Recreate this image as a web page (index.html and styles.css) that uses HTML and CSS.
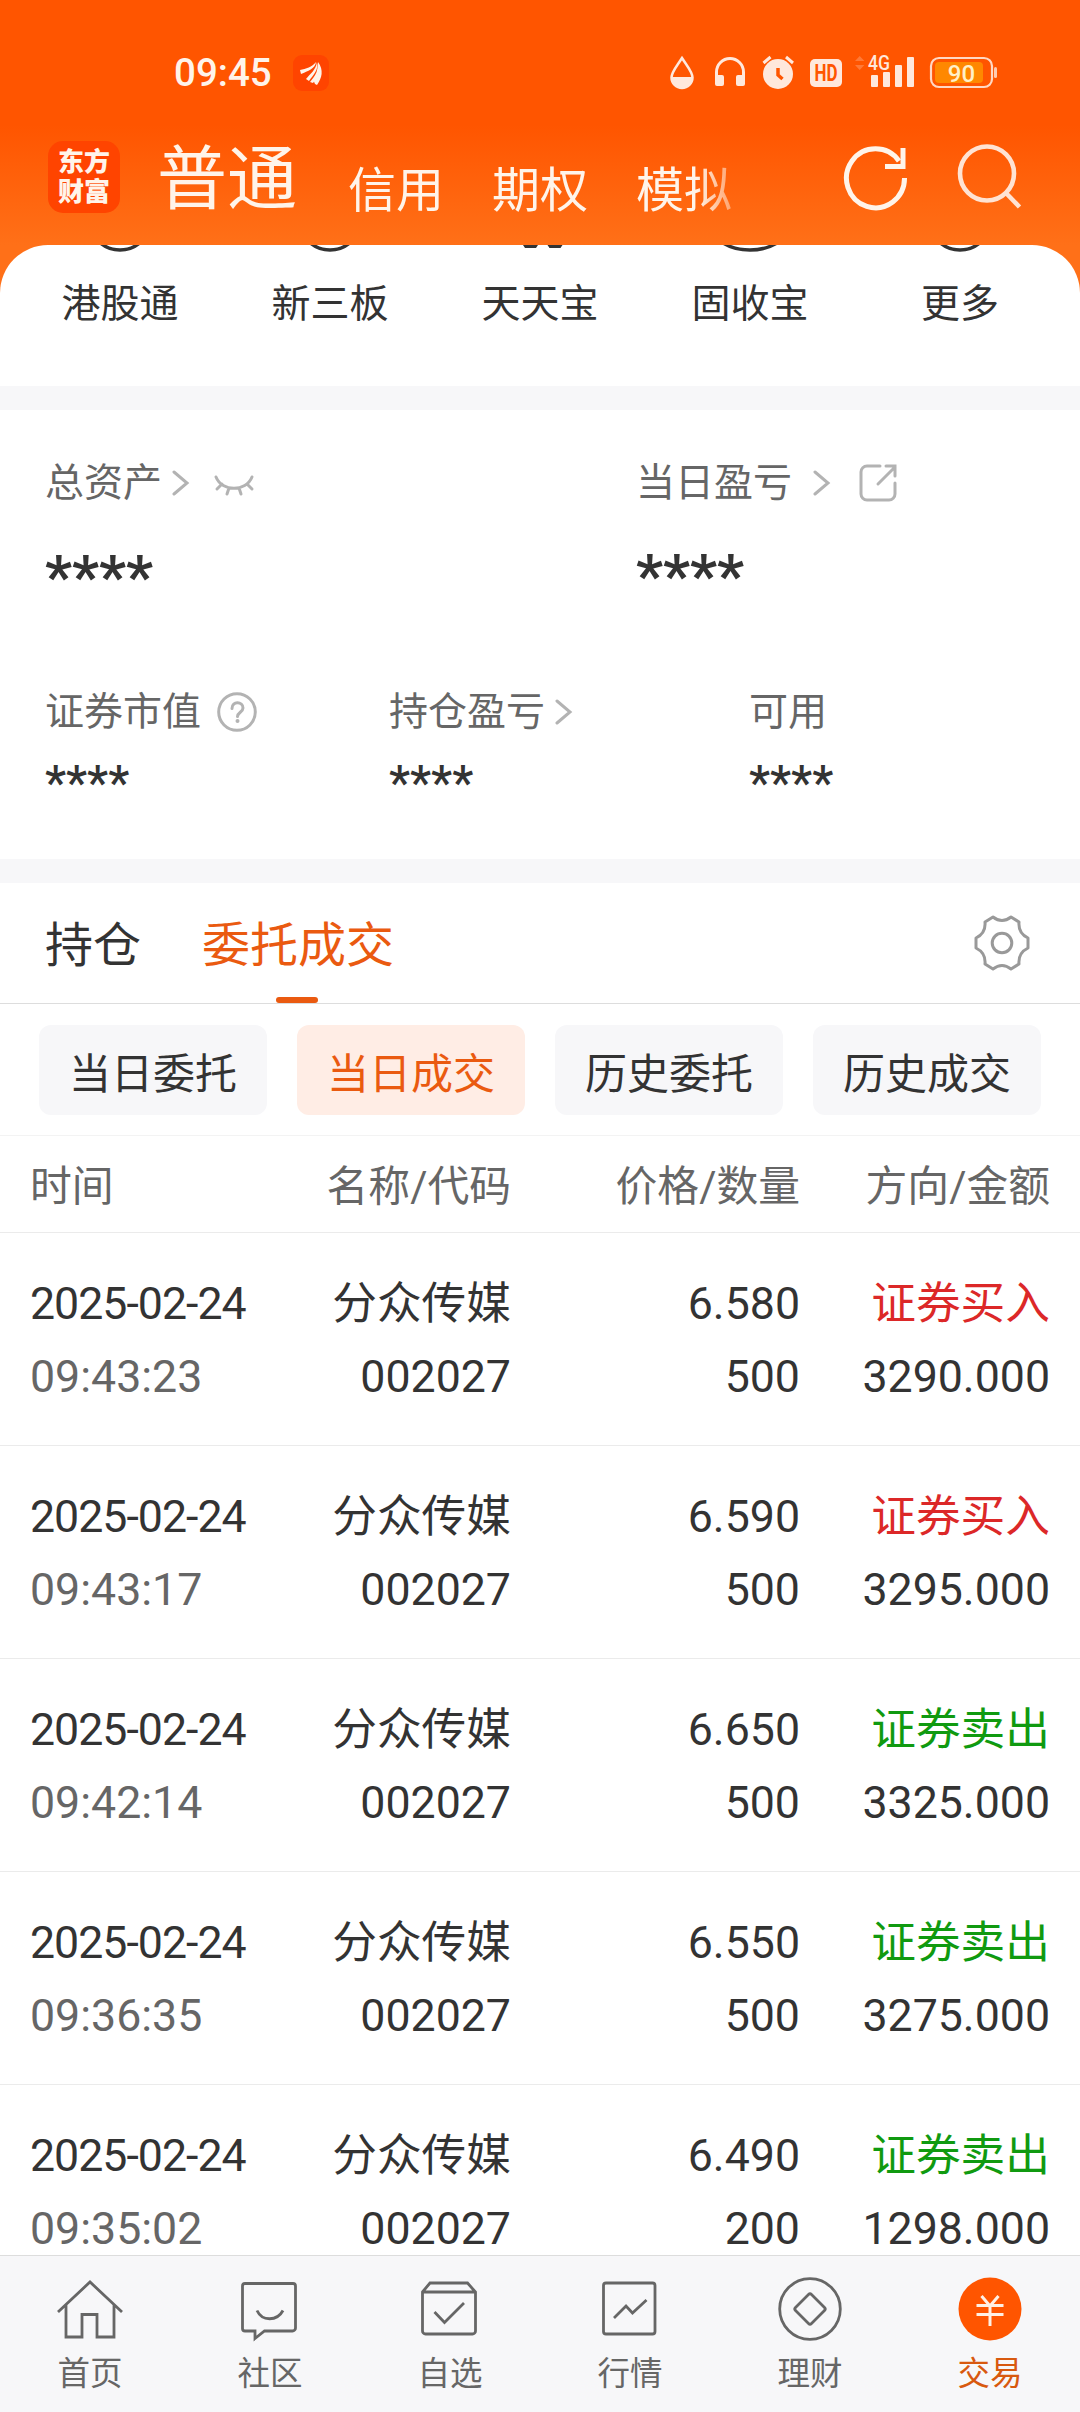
FILE: index.html
```html
<!DOCTYPE html>
<html lang="zh-CN">
  <head>
    <meta charset="UTF-8" />
    <meta name="viewport" content="width=device-width, initial-scale=1.0" />
    <title>东方财富 - 交易</title>
    <link rel="stylesheet" href="styles.css">
  </head>
  <body>
    <header class="header">
      <div class="status">
        <span class="clock">09:45</span>
        <svg class="app-badge" width="36" height="36" viewBox="0 0 36 36">
          <rect width="36" height="36" rx="9" fill="#ff4400" />
          <path d="M7 15c6-1 12-3 16-8-1 7-8 9-15 12zM13 24c4-5 10-9 11-17 2 8-4 13-8 19zM22 29c-2-4-1-6 1-10 1-4 2-7 2-12 6 8 4 16-1 23zM17 27c5-6 9-12 8-20 2 8 0 15-5 21z" fill="#fff4ea" />
        </svg>
        <svg class="status-icons" width="330" height="40" viewBox="668 53 330 40">
          <g fill="#ffe8dc">
            <path d="M682 58c5 8 10.500 14 10.500 19.500a10.500 10.500 0 0 1-21 0C671.500 72 677 66 682 58z" fill="none" stroke="#ffe8dc" stroke-width="2.500" />
            <path d="M671.500 77h21a10.500 10.500 0 0 1-21 0z" />
            <path d="M716.500 80v-8a13.500 13.500 0 0 1 27 0v8" fill="none" stroke="#ffe8dc" stroke-width="3" />
            <rect x="715" y="75" width="9" height="11" rx="2" />
            <rect x="736" y="75" width="9" height="11" rx="2" />
            <circle cx="778" cy="74" r="15" />
            <path d="M763.500 63l7-6M793 63l-7-6" fill="none" stroke="#ffe8dc" stroke-width="3" />
            <path d="M778 68v7l4.500 4" fill="none" stroke="#ff5500" stroke-width="3.500" />
            <rect x="810" y="59" width="32" height="28" rx="5" />
            <path d="M855 61l4.700-5 4.700 5zM855 65h9.400l-4.700 5z" opacity=".25" />
            <rect x="871" y="75" width="7" height="12" rx="1" />
            <rect x="883" y="72" width="7" height="15" rx="1" />
            <rect x="895" y="65" width="7" height="22" rx="1" />
            <rect x="907" y="57" width="7" height="30" rx="1" />
            <rect x="994" y="67" width="3" height="11" rx="1.500" opacity=".8" />
          </g>
          <rect x="931" y="58" width="61" height="29" rx="8" fill="none" stroke="#ffd8c4" stroke-width="2.200" />
          <rect x="935" y="62" width="48" height="21" rx="4" fill="#ff8800" />
          <text class="hd" x="826" y="81" textLength="23" lengthAdjust="spacingAndGlyphs">HD</text>
          <text class="net" x="879" y="70" textLength="22" lengthAdjust="spacingAndGlyphs">4G</text>
          <text class="level" x="961.500" y="81.500">90</text>
        </svg>
      </div>
      <div class="topbar">
        <div class="logo">东方<br>财富</div>
        <nav class="accounts">
          <a class="current">普通</a>
          <a>信用</a>
          <a>期权</a>
          <a>模拟</a>
        </nav>
        <svg class="icon-refresh" width="72" height="72" viewBox="0 0 72 72" fill="none" stroke="#fff4ea" stroke-width="5">
          <path d="M64.500 37a29 29.500 0 1 1-5.500-17" />
          <path d="M63 7v18.500H45" />
        </svg>
        <svg class="icon-search" width="72" height="72" viewBox="0 0 72 72" fill="none" stroke="#ffe3d3" stroke-width="4.600">
          <circle cx="34" cy="32.500" r="27" />
          <path d="M52.500 51.500L66.500 66" />
        </svg>
      </div>
    </header>

    <main class="content">
      <section class="shortcuts">
        <a><svg width="72" height="10" viewBox="0 0 72 10"><ellipse cx="36" cy="-24" rx="30" ry="29" /></svg>港股通</a>
        <a><svg width="72" height="10" viewBox="0 0 72 10"><ellipse cx="36" cy="-24" rx="30" ry="29" /></svg>新三板</a>
        <a><svg width="72" height="10" viewBox="0 0 72 10"><path class="solid" d="M19 0h15l-2 3H21zM43.500 0h15l-2 3h-11z" /></svg>天天宝</a>
        <a><svg width="72" height="10" viewBox="0 0 72 10"><ellipse cx="36" cy="-19" rx="38" ry="24" /></svg>固收宝</a>
        <a><svg width="72" height="10" viewBox="0 0 72 10"><ellipse cx="36" cy="-24" rx="30" ry="29" /></svg>更多</a>
      </section>

      <section class="assets">
        <div class="asset total">
          <div class="label">总资产
            <svg class="chevron" width="18" height="28" viewBox="0 0 18 28"><path d="M2 3l13 11L2 25" /></svg>
            <svg class="eye" width="42" height="28" viewBox="0 0 42 28"><path d="M2 8c6 15 30 15 36 0M8 15l-5 5M15 19l-2 6M25 19l2 6M33 15l5 5" /></svg>
          </div>
          <div class="value">****</div>
        </div>
        <div class="asset total">
          <div class="label">当日盈亏
            <svg class="chevron wide" width="18" height="28" viewBox="0 0 18 28"><path d="M2 3l13 11L2 25" /></svg>
            <svg class="share" width="40" height="40" viewBox="0 0 40 40"><path d="M21 3H8a6 6 0 0 0-6 6v22a6 6 0 0 0 6 6h22a6 6 0 0 0 6-6V20M19 21L36 4M27 3h9v10" /></svg>
          </div>
          <div class="value">****</div>
        </div>
        <div class="asset market">
          <div class="label">证券市值
            <svg class="help" width="40" height="40" viewBox="0 0 40 40"><circle cx="20" cy="20" r="18.300" /><path d="M15 16.500c0-8 11-7 11-.5 0 4-5.500 4.500-5.500 8.500" /><circle class="dot" cx="20.500" cy="29" r="2" /></svg>
          </div>
          <div class="value">****</div>
        </div>
        <div class="asset profit">
          <div class="label">持仓盈亏
            <svg class="chevron" width="18" height="28" viewBox="0 0 18 28"><path d="M2 3l13 11L2 25" /></svg>
          </div>
          <div class="value">****</div>
        </div>
        <div class="asset">
          <div class="label">可用</div>
          <div class="value">****</div>
        </div>
      </section>

      <div class="tabs">
        <a>持仓</a>
        <a class="current">委托成交</a>
        <svg class="gear" width="60" height="60" viewBox="0 0 60 60">
          <path d="M21 4Q30 11 39 4L47 9Q46 20 56 25V35Q46 40 47 51L39 56Q30 49 21 56L13 51Q14 40 4 35V25Q14 20 13 9Z" />
          <circle cx="30" cy="30" r="9.800" />
        </svg>
      </div>

      <div class="chips">
        <button>当日委托</button>
        <button class="current">当日成交</button>
        <button>历史委托</button>
        <button>历史成交</button>
      </div>

      <div class="row head">
        <span>时间</span>
        <span>名称/代码</span>
        <span>价格/数量</span>
        <span>方向/金额</span>
      </div>
      <div class="list">
        <div class="row">
          <span class="date">2025-02-24</span><span>分众传媒</span><span>6.580</span><span class="buy">证券买入</span>
          <span class="time">09:43:23</span><span>002027</span><span>500</span><span>3290.000</span>
        </div>
        <div class="row">
          <span class="date">2025-02-24</span><span>分众传媒</span><span>6.590</span><span class="buy">证券买入</span>
          <span class="time">09:43:17</span><span>002027</span><span>500</span><span>3295.000</span>
        </div>
        <div class="row">
          <span class="date">2025-02-24</span><span>分众传媒</span><span>6.650</span><span class="sell">证券卖出</span>
          <span class="time">09:42:14</span><span>002027</span><span>500</span><span>3325.000</span>
        </div>
        <div class="row">
          <span class="date">2025-02-24</span><span>分众传媒</span><span>6.550</span><span class="sell">证券卖出</span>
          <span class="time">09:36:35</span><span>002027</span><span>500</span><span>3275.000</span>
        </div>
        <div class="row">
          <span class="date">2025-02-24</span><span>分众传媒</span><span>6.490</span><span class="sell">证券卖出</span>
          <span class="time">09:35:02</span><span>002027</span><span>200</span><span>1298.000</span>
        </div>
      </div>
    </main>

    <nav class="bottom">
      <a>
        <svg width="72" height="72" viewBox="0 0 72 72"><path d="M4 39L36 9l32 30M12 32v32h16V41.500h15V64h17V32" /></svg>
        首页
      </a>
      <a>
        <svg width="72" height="72" viewBox="0 0 72 72"><path d="M11 10.500h48a2.500 2.500 0 0 1 2.500 2.500v42a3 3 0 0 1-3 3h-28L21 65.500V58H11a2.500 2.500 0 0 1-2.500-2.500V13a2.500 2.500 0 0 1 2.500-2.500zM23 37.500c5 11 20 11 26 0" /></svg>
        社区
      </a>
      <a>
        <svg width="72" height="72" viewBox="0 0 72 72"><path d="M8.500 19L16 10h37.500l8 9v39a3 3 0 0 1-3 3h-47a3 3 0 0 1-3-3zM8.500 19h53M20.500 39l10 10.500L50 30" /></svg>
        自选
      </a>
      <a>
        <svg width="72" height="72" viewBox="0 0 72 72"><rect x="9.500" y="10" width="51.500" height="51" rx="2.500" /><path d="M20 45l12-12 6.500 7L52.500 27" /></svg>
        行情
      </a>
      <a>
        <svg width="72" height="72" viewBox="0 0 72 72"><circle cx="36" cy="36" r="30.300" /><path d="M34.500 21.500q1.500-1.500 3 0l13 13q1.500 1.500 0 3l-13 13q-1.500 1.500-3 0l-13-13q-1.500-1.500 0-3z" /></svg>
        理财
      </a>
      <a class="current">
        <svg width="72" height="72" viewBox="0 0 72 72"><circle cx="36" cy="36" r="31.500" /><path d="M27.500 23l8.500 10 8.500-10M22.500 32.500h27M22.500 41.500h27M36 33v20" /></svg>
        交易
      </a>
    </nav>
  </body>
</html>
```
FILE: styles.css
```css
* {
  box-sizing: border-box;
}
body {
  display: flex;
  flex-direction: column;
  width: 1080px;
  height: 2412px;
  margin: 0;
  overflow: hidden;
  background: #fff;
  color: #333;
  font-family: Roboto, "Noto Sans CJK SC", sans-serif;
  font-weight: 400;
}
svg {
  display: block;
  flex: none;
}

/* header */
.header {
  flex: none;
  height: 300px;
  background: linear-gradient(#ff5500 0, #ff5500 125px, #ff7018 245px);
}
.status {
  display: flex;
  align-items: center;
  height: 93px;
  padding: 53px 82px 0 174px;
}
.clock {
  width: 119px;
  color: #fff4ea;
  font-size: 38.5px;
  font-weight: 500;
  line-height: 40px;
}
.status-icons {
  margin-left: auto;
  overflow: visible;
}
.hd,
.net,
.level {
  font-family: Roboto, sans-serif;
  text-anchor: middle;
}
.hd {
  fill: #ff5500;
  font-size: 23px;
  font-weight: 700;
}
.net {
  fill: #ffe8dc;
  font-size: 21px;
  font-weight: 500;
}
.level {
  fill: #fff0c8;
  font-size: 24px;
  font-weight: 500;
}
.topbar {
  display: flex;
  height: 152px;
  padding: 48px 0 0 48px;
}
.logo {
  width: 72px;
  height: 72px;
  padding-top: 6px;
  border-radius: 15px;
  background: #ff4400;
  color: #fff4ea;
  font-size: 26px;
  font-weight: 900;
  line-height: 30px;
  text-align: center;
}
.accounts {
  display: flex;
  align-items: flex-start;
  gap: 48px;
  width: 640px;
  height: 104px;
  padding-top: 4px;
  margin-left: 37px;
  color: #fff4ea;
  font-size: 48px;
  line-height: 92px;
  -webkit-mask-image: linear-gradient(90deg, #000 540px, transparent 600px);
  mask-image: linear-gradient(90deg, #000 540px, transparent 600px);
}
.accounts .current {
  margin-right: 3px;
  font-size: 70px;
  line-height: 70px;
}
.icon-refresh {
  margin-left: 43px;
}
.icon-search {
  margin-left: 41px;
}

.content {
  flex: 1;
  min-height: 0;
  margin-top: -55px;
  overflow: hidden;
  border-radius: 48px 48px 0 0;
  background: #fff;
}

/* shortcuts */
.shortcuts {
  display: grid;
  grid-template-columns: repeat(5, 210px);
  justify-content: center;
  height: 141px;
}
.shortcuts a {
  display: flex;
  flex-direction: column;
  align-items: center;
  gap: 24px;
  font-size: 39px;
  line-height: 50px;
}
.shortcuts svg {
  fill: none;
  stroke: #333;
  stroke-width: 3.5;
}
.shortcuts .solid {
  fill: #333;
  stroke: none;
}

/* assets */
.assets {
  display: flex;
  flex-wrap: wrap;
  align-content: flex-start;
  height: 497px;
  padding: 43px 0 0 45px;
  border-top: 24px solid #f7f7f9;
  border-bottom: 24px solid #f7f7f9;
}
.asset {
  width: 280px;
}
.market {
  width: 344px;
}
.profit {
  width: 360px;
}
.total {
  width: 591px;
  height: 229px;
}
.total + .total {
  width: 440px;
}
.label {
  display: flex;
  align-items: center;
  height: 60px;
  color: #666;
  font-size: 39px;
  line-height: 62px;
}
.label svg {
  fill: none;
  stroke: #b3b3b3;
  stroke-width: 3;
  stroke-linecap: round;
}
.label .dot {
  fill: #b3b3b3;
  stroke: none;
}
.chevron {
  margin-left: 10px;
}
.chevron.wide {
  margin-left: 21px;
}
.eye {
  margin-left: 24px;
}
.share {
  margin-left: 28px;
}
.help {
  margin-left: 16px;
}
.value {
  padding-top: 14px;
  font-size: 47.5px;
  font-weight: 500;
  line-height: 54px;
}
.total .value {
  padding-top: 37px;
  font-size: 59.5px;
  font-weight: 700;
}
.total + .total .value {
  padding-top: 36px;
}

/* tabs */
.tabs {
  display: flex;
  gap: 61px;
  height: 121px;
  padding: 0 48px 0 45px;
  border-bottom: 1px solid #ddd;
  font-size: 48px;
  line-height: 125px;
}
.tabs .current {
  position: relative;
  color: #ea5a10;
}
.tabs .current::after {
  content: "";
  position: absolute;
  left: 74px;
  bottom: 0;
  width: 42px;
  height: 6px;
  border-radius: 3px;
  background: #ea5a10;
}
.gear {
  margin: 30px 0 0 auto;
  fill: none;
  stroke: #999;
  stroke-width: 3;
  stroke-linejoin: round;
}

.chips {
  display: flex;
  gap: 30px;
  height: 132px;
  padding: 21px 39px;
  border-bottom: 1px solid #f3f3f3;
}
.chips button {
  width: 228px;
  height: 90px;
  padding: 0;
  border: 0;
  border-radius: 12px;
  background: #f7f7f9;
  color: #333;
  font-family: inherit;
  font-size: 42px;
}
.chips .current {
  background: #ffede5;
  color: #ea5a10;
}

/* deals */
.row {
  display: grid;
  grid-template-columns: 240px 241px 289px 250px;
  grid-auto-rows: 73px;
  height: 213px;
  padding: 35px 30px 0;
  border-bottom: 1px solid #ebebeb;
  font-size: 44.7px;
  line-height: 73px;
  text-align: right;
}
.row.head {
  grid-auto-rows: 96px;
  height: 97px;
  padding-top: 0;
  color: #666;
  font-size: 41.8px;
  line-height: 101px;
}
.row span:nth-child(4n + 1) {
  text-align: left;
}
.date {
  letter-spacing: -1px;
}
.time {
  color: #666;
}
.buy {
  color: #dc2828;
}
.sell {
  color: #109a10;
}

/* bottom bar */
.bottom {
  display: grid;
  grid-template-columns: repeat(6, 180px);
  flex: none;
  height: 157px;
  padding-top: 17px;
  border-top: 1px solid #ddd;
  background: #f7f7f9;
}
.bottom a {
  display: flex;
  flex-direction: column;
  align-items: center;
  gap: 9px;
  color: #666;
  font-size: 32.5px;
  line-height: 40px;
}
.bottom svg {
  fill: none;
  stroke: #666;
  stroke-width: 2.8;
}
.bottom .current {
  color: #d8590f;
}
.bottom .current circle {
  fill: #ff5500;
  stroke: none;
}
.bottom .current path {
  stroke: #fff0e4;
  stroke-width: 3;
}
```
